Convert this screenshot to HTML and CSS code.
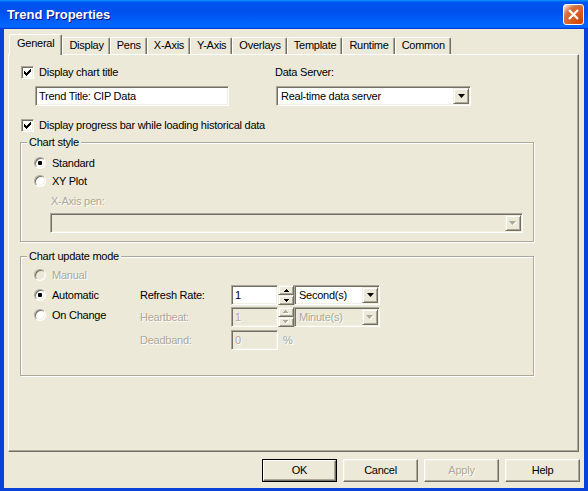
FILE: index.html
```html
<!DOCTYPE html>
<html>
<head>
<meta charset="utf-8">
<link rel="stylesheet" href="styles.css">
</head>
<body>
<div class="window">
  <div class="titlebar">
    <span class="title">Trend Properties</span>
    <span class="close"><svg width="21" height="21" viewBox="0 0 21 21"><path d="M6 6 L15 15 M15 6 L6 15" stroke="#fff" stroke-width="2.2" fill="none"/></svg></span>
  </div>
  <div class="body">
    <div class="tabs">
      <div class="tab active">General</div>
      <div class="tab">Display</div>
      <div class="tab">Pens</div>
      <div class="tab">X-Axis</div>
      <div class="tab">Y-Axis</div>
      <div class="tab">Overlays</div>
      <div class="tab">Template</div>
      <div class="tab">Runtime</div>
      <div class="tab">Common</div>
    </div>
    <div class="panel">
      <div class="top-row">
        <div class="col-left">
          <div class="check"><span class="box"><svg width="7" height="7" viewBox="0 0 7 7"><path d="M0 2h1v3H0zM1 3h1v3H1zM2 4h1v3H2zM3 3h1v3H3zM4 2h1v3H4zM5 1h1v3H5zM6 0h1v3H6z" fill="#000"/></svg></span>Display chart title</div>
          <div class="field title-field">Trend Title: CIP Data</div>
        </div>
        <div class="col-right">
          <div class="label">Data Server:</div>
          <div class="combo server"><span class="val">Real-time data server</span><span class="drop"><svg width="7" height="4" viewBox="0 0 7 4"><path d="M0 0h7L3.5 4z" fill="#000"/></svg></span></div>
        </div>
      </div>
      <div class="check progress"><span class="box"><svg width="7" height="7" viewBox="0 0 7 7"><path d="M0 2h1v3H0zM1 3h1v3H1zM2 4h1v3H2zM3 3h1v3H3zM4 2h1v3H4zM5 1h1v3H5zM6 0h1v3H6z" fill="#000"/></svg></span>Display progress bar while loading historical data</div>

      <fieldset class="group style-group">
        <legend>Chart style</legend>
        <div class="group-body">
          <div class="radio-row"><span class="radio on"></span>Standard</div>
          <div class="radio-row"><span class="radio"></span>XY Plot</div>
          <div class="sub-label disabled">X-Axis pen:</div>
          <div class="combo pen disabled"><span class="val"></span><span class="drop"><svg width="8" height="5" viewBox="0 0 8 5"><path d="M1 1h7L4.5 5z" fill="#fff"/><path d="M0 0h7L3.5 4z" fill="#ACA899"/></svg></span></div>
        </div>
      </fieldset>

      <fieldset class="group update-group">
        <legend>Chart update mode</legend>
        <div class="group-body update-body">
          <div class="radios">
            <div class="radio-row disabled"><span class="radio"></span>Manual</div>
            <div class="radio-row"><span class="radio on"></span>Automatic</div>
            <div class="radio-row"><span class="radio"></span>On Change</div>
          </div>
          <div class="rates">
            <div class="rate-row">
              <span class="rate-label">Refresh Rate:</span>
              <span class="field num">1</span>
              <span class="spin"><span class="spin-btn"><svg width="5" height="3" viewBox="0 0 5 3"><path d="M2 0h1v1h1v1h1v1H0V2h1V1h1z" fill="#000"/></svg></span><span class="spin-btn"><svg width="5" height="3" viewBox="0 0 5 3"><path d="M0 0h5v1H4v1H3v1H2V2H1V1H0z" fill="#000"/></svg></span></span>
              <span class="combo unit"><span class="val">Second(s)</span><span class="drop"><svg width="7" height="4" viewBox="0 0 7 4"><path d="M0 0h7L3.5 4z" fill="#000"/></svg></span></span>
            </div>
            <div class="rate-row disabled">
              <span class="rate-label">Heartbeat:</span>
              <span class="field num">1</span>
              <span class="spin"><span class="spin-btn"><svg width="6" height="4" viewBox="0 0 6 4"><path d="M3 1h1v1h1v1h1v1H1V3h1V2h1z" fill="#fff"/><path d="M2 0h1v1h1v1h1v1H0V2h1V1h1z" fill="#ACA899"/></svg></span><span class="spin-btn"><svg width="6" height="4" viewBox="0 0 6 4"><path d="M1 1h5v1H5v1H4v1H3V3H2V2H1z" fill="#fff"/><path d="M0 0h5v1H4v1H3v1H2V2H1V1H0z" fill="#ACA899"/></svg></span></span>
              <span class="combo unit"><span class="val">Minute(s)</span><span class="drop"><svg width="8" height="5" viewBox="0 0 8 5"><path d="M1 1h7L4.5 5z" fill="#fff"/><path d="M0 0h7L3.5 4z" fill="#ACA899"/></svg></span></span>
            </div>
            <div class="rate-row disabled">
              <span class="rate-label">Deadband:</span>
              <span class="field num">0</span>
              <span class="pct">%</span>
            </div>
          </div>
        </div>
      </fieldset>
    </div>
    <div class="buttons">
      <span class="btn default"><span class="btn-in">OK</span></span>
      <span class="btn"><span class="btn-in">Cancel</span></span>
      <span class="btn disabled"><span class="btn-in">Apply</span></span>
      <span class="btn"><span class="btn-in">Help</span></span>
    </div>
  </div>
</div>
</body>
</html>
```
FILE: styles.css
```css
* { box-sizing: border-box; }
html, body { margin: 0; padding: 0; }
body {
  width: 588px; height: 491px; overflow: hidden;
  font-family: "Liberation Sans", Arial, sans-serif;
  font-size: 11px; letter-spacing: -0.25px; color: #000; background: #0831d9;
}
.window { width: 588px; height: 491px; display: flex; flex-direction: column; }

.titlebar {
  height: 29px; flex: none;
  display: flex; align-items: center; justify-content: space-between;
  padding: 0 4px 0 7px;
  background: linear-gradient(180deg, #0997ff 0, #0053ee 8%, #0050ee 40%, #0066ff 88%, #0066ff 93%, #005bff 95%, #003dd7 96%, #003dd7 100%);
}
.title { font: bold 13px "Liberation Sans", Arial, sans-serif; letter-spacing: 0; color: #fff; text-shadow: 1px 1px #0f1089; }
.close {
  width: 21px; height: 21px; border: 1px solid #fff; border-radius: 3px;
  display: flex; align-items: center; justify-content: center;
  background: radial-gradient(circle at 90% 90%, #cc4600 0, #dc6527 55%, #cd7546 70%, #ffccb2 90%, #fff 100%);
}
.close svg { display: block; margin: -1px; }

.body {
  flex: 1; display: flex; flex-direction: column;
  background: #ECE9D8;
  border-style: solid; border-color: #0842d8; border-width: 0 4px 3px 4px;
  padding: 5px 5px 6px 4px;
}

.tabs { display: flex; align-items: flex-end; height: 20px; padding-left: 1px; position: relative; z-index: 1; }
.tab {
  height: 17px; padding: 0 5px 1px 6px;
  display: flex; align-items: center; justify-content: center;
  border: 1px solid; border-bottom: 0;
  border-color: #fff #716F64 transparent #fff;
  border-radius: 2px 2px 0 0;
  box-shadow: inset -1px 0 #ACA899;
  line-height: 13px;
}
.tab.active { height: 21px; margin-bottom: -1px; background: #ECE9D8; padding: 0 7px 3px; }

.panel {
  flex: 1; display: flex; flex-direction: column; align-items: flex-start;
  border: 1px solid; border-color: #fff #716F64 #716F64 #fff;
  box-shadow: inset -1px -1px #ACA899;
  padding: 11px 0 0 12px;
}

.top-row { display: flex; }
.col-left { width: 208px; display: flex; flex-direction: column; }
.col-right { margin-left: 46px; display: flex; flex-direction: column; }
.label { height: 13px; line-height: 13px; }

.check { display: flex; align-items: center; height: 13px; gap: 5px; line-height: 13px; }
.box {
  width: 13px; height: 13px; flex: none; background: #fff;
  border: 1px solid; border-color: #ACA899 #fff #fff #ACA899;
  box-shadow: inset 1px 1px #716F64, inset -1px -1px #F1EFE2;
  padding: 2px 0 0 2px;
}
.box svg { display: block; }
.progress { margin-top: 13px; }

.field {
  height: 20px; background: #fff;
  border: 1px solid; border-color: #ACA899 #fff #fff #ACA899;
  box-shadow: inset 1px 1px #716F64, inset -1px -1px #F1EFE2;
  padding: 0 3px; display: flex; align-items: center; line-height: 13px;
}
.title-field { margin-top: 7px; margin-left: 14px; width: 194px; }

.combo {
  height: 20px; background: #fff;
  border: 1px solid; border-color: #ACA899 #fff #fff #ACA899;
  box-shadow: inset 1px 1px #716F64, inset -1px -1px #F1EFE2;
  padding: 1px; display: flex; align-items: center;
}
.combo .val { flex: 1; padding-left: 3px; line-height: 13px; white-space: nowrap; }
.drop {
  width: 16px; height: 16px; flex: none;
  border: 1px solid; border-color: #F1EFE2 #716F64 #716F64 #F1EFE2;
  box-shadow: inset 1px 1px #fff, inset -1px -1px #ACA899;
  background: #ECE9D8;
  display: flex; align-items: center; justify-content: center;
}
.drop svg { display: block; }
.server { margin-top: 7px; margin-left: 1px; width: 195px; }

.group {
  margin: 4px 0 0 -1px; width: 514px; min-width: 0; padding: 0;
  border: 1px solid #ACA899;
  box-shadow: inset 1px 1px #fff, 1px 1px #fff;
}
.group legend {
  margin-left: 6px; padding: 0 2px; line-height: 13px; height: 13px;
  background: #ECE9D8;
}
.group-body { padding: 5px 0 8px 13px; display: flex; flex-direction: column; align-items: flex-start; }

.radio-row { height: 18px; display: flex; align-items: center; gap: 6px; line-height: 13px; }
.radio {
  width: 12px; height: 12px; border-radius: 50%; position: relative; flex: none;
  background: #fff;
  border: 1px solid; border-color: #ACA899 #fff #fff #ACA899;
  box-shadow: inset 1px 1px #716F64, inset -1px -1px #F1EFE2;
}
.radio.on::after {
  content: ""; position: absolute; left: 3px; top: 3px; width: 4px; height: 4px;
  border-radius: 1px; background: #000;
}
.disabled { color: #ACA899; text-shadow: 1px 1px #fff; }
.radio-row.disabled .radio { background: #ECE9D8; }

.sub-label { margin: 5px 0 0 17px; height: 13px; line-height: 13px; }
.pen { margin: 5px 0 0 16px; width: 473px; background: #ECE9D8; }

.update-group { margin-top: 8px; }
.update-body { flex-direction: row; padding: 2px 0 25px 13px; }
.radios { width: 106px; display: flex; flex-direction: column; }
.radios .radio-row { height: 20px; }
.rates { margin-top: 20px; display: flex; flex-direction: column; gap: 2px; }
.rate-row { display: flex; align-items: center; height: 20px; }
.rate-row + .rate-row + .rate-row { margin-top: 1px; }
.rate-label { width: 91px; line-height: 13px; }
.num { width: 47px; }
.rate-row.disabled .field, .rate-row.disabled .combo { background: #ECE9D8; }
.spin { width: 16px; height: 20px; display: flex; flex-direction: column; }
.spin-btn {
  height: 10px; display: flex; align-items: center; justify-content: center;
  border: 1px solid; border-color: #F1EFE2 #716F64 #716F64 #F1EFE2;
  box-shadow: inset 1px 1px #fff, inset -1px -1px #ACA899;
  background: #ECE9D8;
}
.spin-btn svg { display: block; }
.unit { width: 86px; }
.pct { margin-left: 5px; line-height: 13px; }

.buttons { display: flex; justify-content: flex-end; gap: 6px; margin-top: 7px; margin-right: -1px; height: 23px; flex: none; }
.btn {
  width: 75px; height: 23px; display: flex;
  border: 1px solid; border-color: #fff #716F64 #716F64 #fff;
  box-shadow: inset -1px -1px #ACA899, inset 1px 1px #F1EFE2;
  background: #ECE9D8;
}
.btn-in { flex: 1; display: flex; align-items: center; justify-content: center; line-height: 13px; }
.btn.default { border-color: #000; box-shadow: none; }
.btn.default .btn-in {
  border: 1px solid; border-color: #fff #716F64 #716F64 #fff;
  box-shadow: inset -1px -1px #ACA899;
}
.btn.disabled { color: #ACA899; text-shadow: 1px 1px #fff; }
```
